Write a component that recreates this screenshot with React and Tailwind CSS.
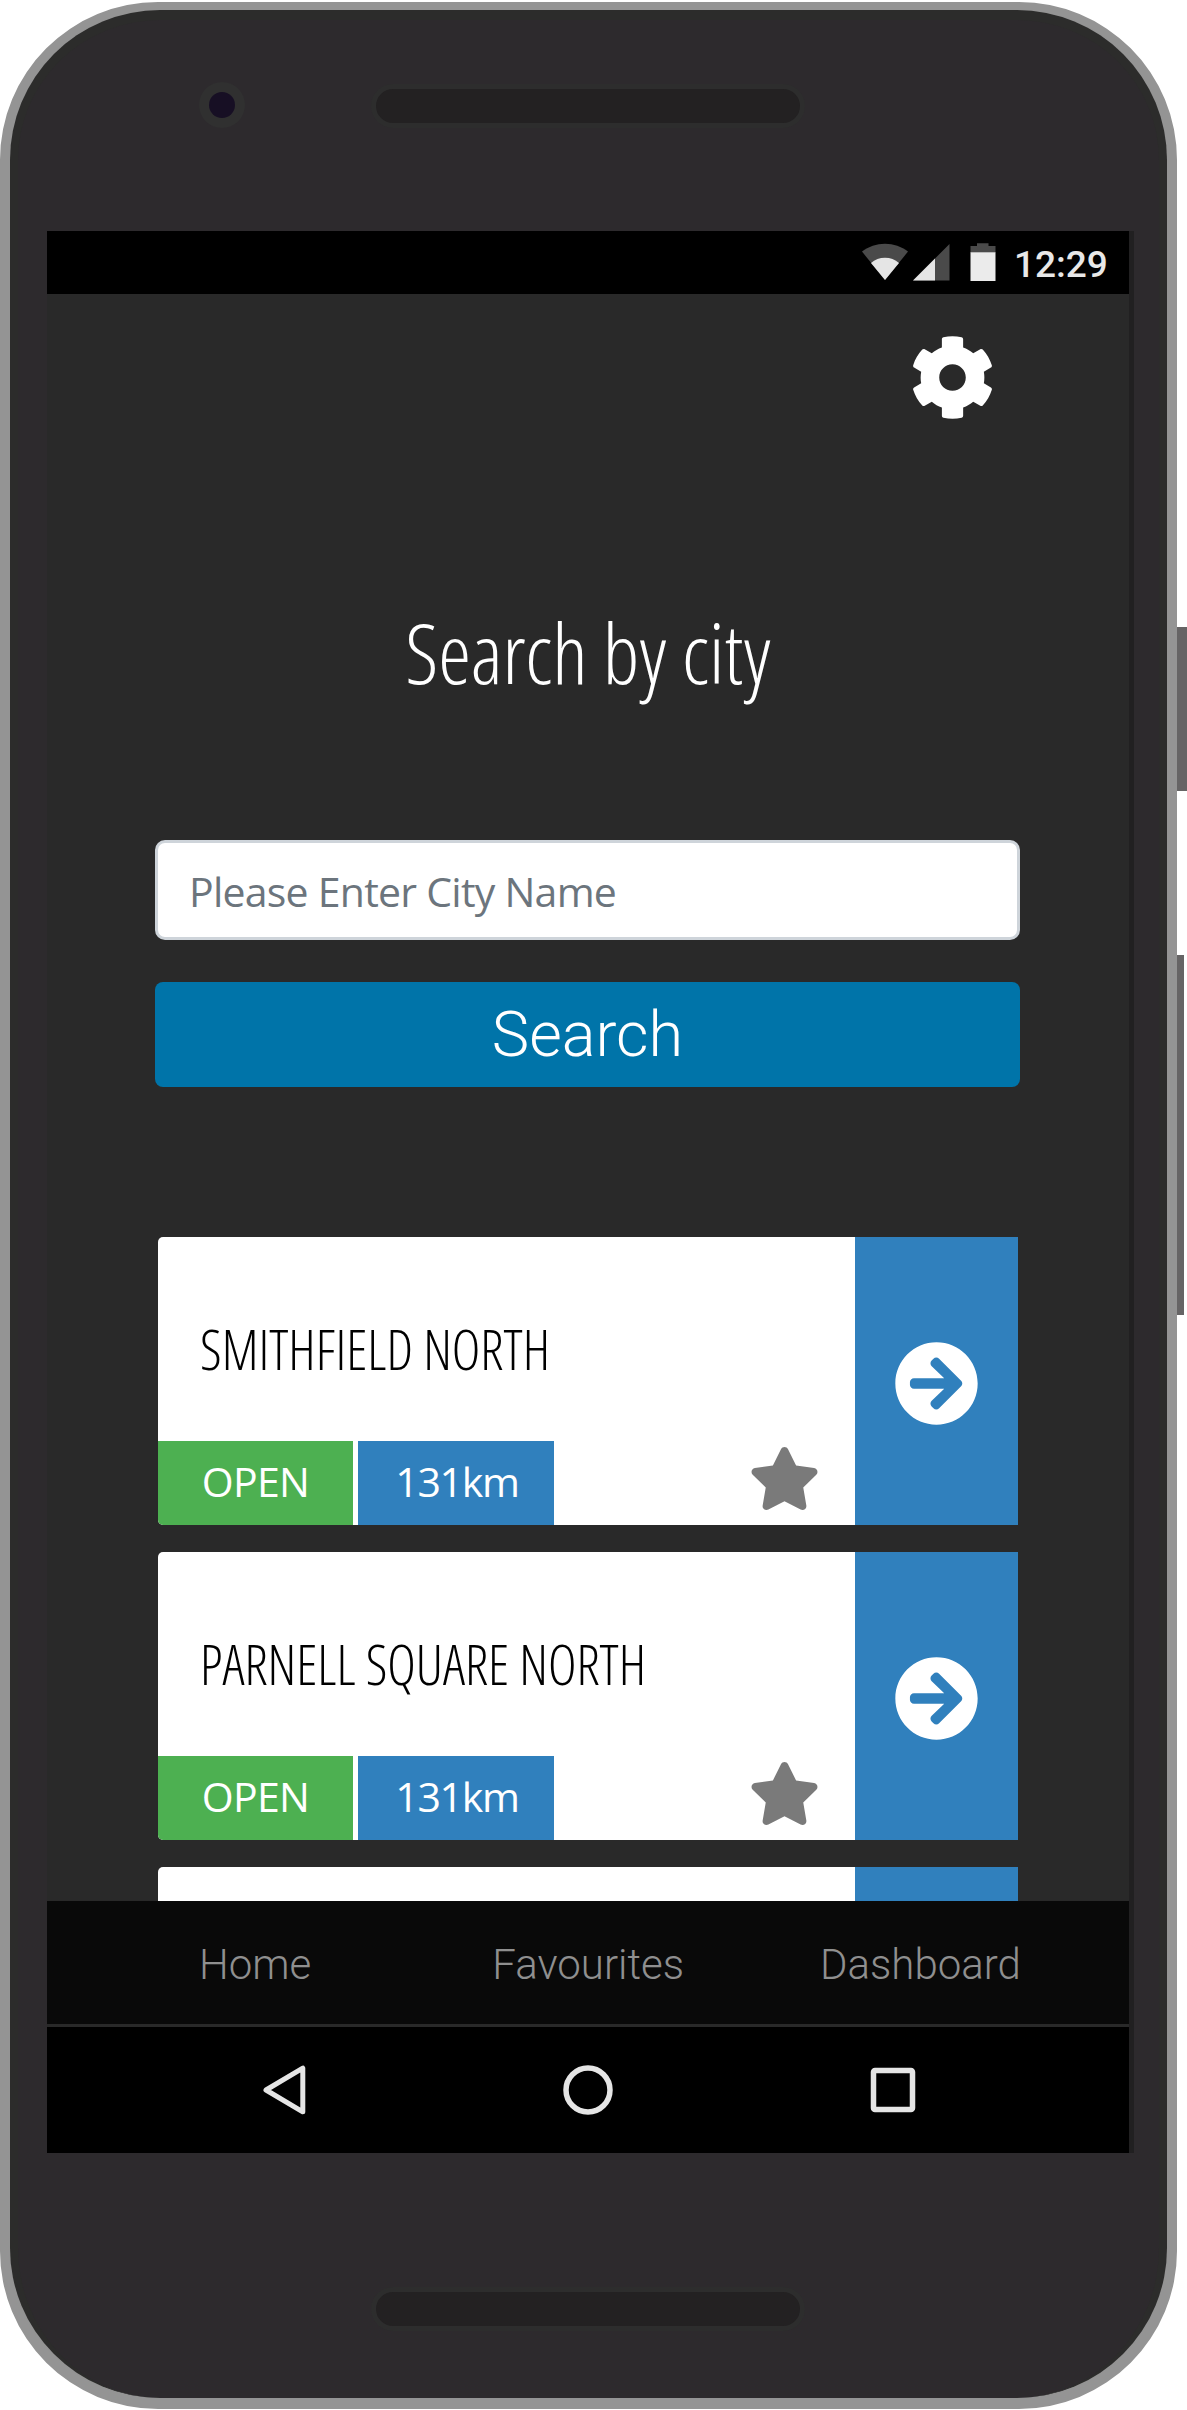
import { FaArrowCircleRight, FaCog, FaStar } from 'react-icons/fa';

const stations = [
  { name: 'SMITHFIELD NORTH', status: 'OPEN', distance: '131km' },
  { name: 'PARNELL SQUARE NORTH', status: 'OPEN', distance: '131km' },
];

function Speaker() {
  return <div className="h-[44px] w-[434px] rounded-full border-[5.5px] border-[#2d2d2d] bg-[#232122]" />;
}

function StatusBar() {
  return (
    <div className="flex h-[63px] shrink-0 items-start bg-black pl-[815px]">
      <svg className="mt-[12px] h-[38px] w-[46px]" viewBox="0 0 46 38">
        <path d="M0 8.600C6.500 3.500 14.500 0.700 23 0.700S39.500 3.500 46 8.600L23 37Z" fill="#4a4a4a" />
        <path d="M9 20C12.800 16.700 17.800 14.800 23 14.800S33.200 16.700 37 20L23 37Z" fill="#e5e5e5" />
      </svg>
      <svg className="ml-[5px] mt-[12px] h-[38px] w-[37px]" viewBox="0 0 37 38">
        <path d="M36.500 1V37.500H0Z" fill="#4a4a4a" />
        <path d="M22 15.500V37.500H0Z" fill="#e5e5e5" />
      </svg>
      <svg className="ml-[20px] mt-[12px] h-[38px] w-[26px]" viewBox="0 0 26 38">
        <path d="M7 0.300H18.500V3H25.500V10H0.500V3H7Z" fill="#4a4a4a" />
        <path d="M0.500 9.300H25.500V38H0.500Z" fill="#ebebeb" />
      </svg>
      <span className="ml-[18px] mt-[4px] font-[Roboto] text-[37px] font-medium leading-[60px] text-[#e8e8e8]">12:29</span>
    </div>
  );
}

function CardShell({ children, action }) {
  return (
    <div className="flex h-[288px] w-[860px] shrink-0 overflow-hidden rounded-l-[5px] bg-white">
      <div className="flex w-[697px] flex-col">{children}</div>
      <div className="flex flex-1 items-center justify-center bg-[#3080bd] pr-[1px] pt-[5px]">{action}</div>
    </div>
  );
}

function StationCard({ name, status, distance }) {
  return (
    <CardShell action={<FaArrowCircleRight className="h-[85px] w-[85px] text-white" />}>
      <div className="h-[204px] pl-[42px] pt-[72px] font-['Open_Sans'] text-[54.300px] font-light leading-[80px] text-black font-stretch-condensed">
        {name}
      </div>
      <div className="flex h-[84px] font-['Open_Sans'] text-[41px] leading-[80px] text-white">
        <div className="w-[195px] bg-[#4db051] text-center tracking-[-0.700px]">{status}</div>
        <div className="ml-[5px] w-[196px] bg-[#3080bd] pl-[2px] text-center tracking-[-1.300px]">{distance}</div>
        <FaStar className="ml-[195px] mt-[5px] h-[65px] w-[71px] text-[#7a7a7a]" />
      </div>
    </CardShell>
  );
}

function AppContent() {
  return (
    <div className="flex h-[1607px] flex-col overflow-hidden bg-[#292929] pl-[108px]">
      <FaCog className="ml-[755px] mt-[41px] h-[85px] w-[85px] shrink-0 text-white" />
      <h1 className="mt-[182px] h-[99px] w-[866px] text-center font-['Open_Sans'] text-[83px] font-light leading-[99px] tracking-[-0.200px] text-white font-stretch-condensed">
        Search by city
      </h1>
      <input
        className="mt-[139px] h-[100px] w-[865px] shrink-0 rounded-[10px] border-[3px] border-[#ced4da] bg-white px-[31px] pt-[2px] font-['Open_Sans'] text-[41px] tracking-[-0.750px] text-[#6c757d] placeholder:text-[#6c757d]"
        placeholder="Please Enter City Name"
      />
      <button className="mt-[42px] h-[105px] w-[865px] shrink-0 rounded-[8px] bg-[#0074a9] font-[Roboto] text-[63px] font-light leading-[106px] text-white">
        Search
      </button>
      <div className="mt-[150px] flex flex-col gap-[27px] pl-[3px]">
        {stations.map((s) => (
          <StationCard key={s.name} {...s} />
        ))}
        <CardShell />
      </div>
    </div>
  );
}

function TabBar() {
  return (
    <nav className="flex h-[123px] items-center bg-[#090909] pl-[152px] pt-[3px] font-[Roboto] text-[42px] font-light text-[#8f8f8f]">
      <span>Home</span>
      <span className="ml-[181px]">Favourites</span>
      <span className="ml-[136px]">Dashboard</span>
    </nav>
  );
}

function AndroidBar() {
  return (
    <div className="mt-[3px] flex h-[126px] items-center bg-black pl-[214px]">
      <svg className="h-[52px] w-[46px]" viewBox="0 0 46 52" fill="none" stroke="#e5e5e5" strokeWidth="5" strokeLinejoin="round">
        <path d="M41.800 4.200V47.800L5 26Z" />
      </svg>
      <svg className="ml-[255px] h-[52px] w-[52px]" viewBox="0 0 52 52" fill="none" stroke="#e5e5e5" strokeWidth="5.500">
        <circle cx="26" cy="26" r="22" />
      </svg>
      <svg className="ml-[256px] h-[46px] w-[46px]" viewBox="0 0 46 46" fill="none" stroke="#e5e5e5" strokeWidth="5.500">
        <rect x="3.500" y="3.500" width="39" height="39" rx="1.500" />
      </svg>
    </div>
  );
}

export default function App() {
  return (
    <div className="relative h-[2410px] w-[1187px] overflow-hidden bg-white">
      <div className="absolute left-[1177px] top-[627px] h-[164px] w-[10px] bg-[#666465]" />
      <div className="absolute left-[1177px] top-[955px] h-[360px] w-[7px] bg-[#666465]" />
      <div className="pt-[2px]">
        <div className="h-[2407px] w-[1177px] rounded-[158px] border-x-[10px] border-b-[11px] border-t-[8px] border-[#949494] bg-[#949494]">
          <div className="flex h-[2388px] flex-col rounded-[150px] border-x-[8px] border-t-[10px] border-[#2c2c2b] bg-[#2d2a2d]">
            <div className="flex h-[211px] items-start pl-[181px] pt-[62px]">
              <div className="flex h-[46px] w-[46px] items-center justify-center rounded-full bg-[#303030]">
                <div className="h-[26px] w-[26px] rounded-full bg-[#170f24]" />
              </div>
              <div className="ml-[126px] mt-[2px]">
                <Speaker />
              </div>
            </div>
            <div className="ml-[29px] w-[1087px] bg-[#212021]">
              <div className="flex w-[1082px] flex-col bg-[#292929]">
                <StatusBar />
                <AppContent />
                <TabBar />
                <AndroidBar />
              </div>
            </div>
            <div className="pl-[353px] pt-[134px]">
              <Speaker />
            </div>
          </div>
        </div>
      </div>
    </div>
  );
}
